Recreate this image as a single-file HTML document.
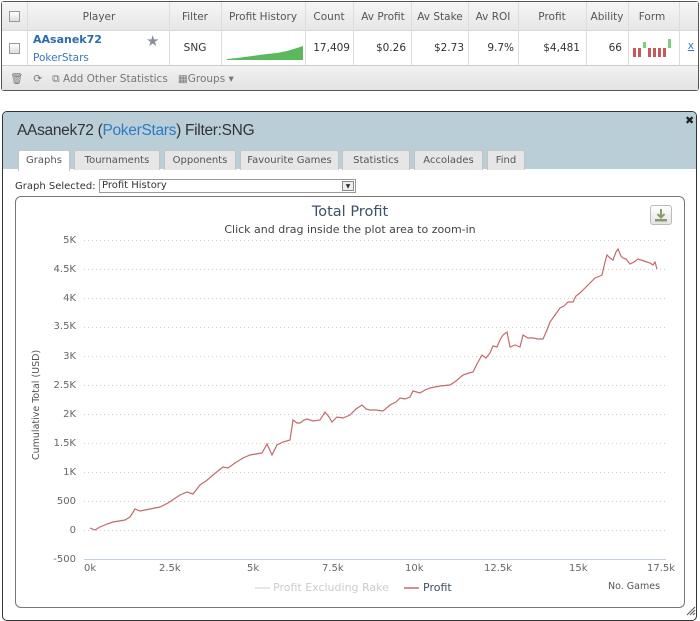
<!DOCTYPE html>
<html><head><meta charset="utf-8"><style>
*{margin:0;padding:0;box-sizing:border-box}
body{width:700px;height:618px;background:#fff;font-family:"DejaVu Sans","Liberation Sans",sans-serif;position:relative;overflow:hidden;color:#333}
.a{position:absolute}
.tbl{left:1px;top:1px;width:698px;height:90px;border:1px solid #555;border-radius:3px;background:#fff}
.hdr{left:0;top:0;width:696px;height:29px;background:linear-gradient(#f6f6f6,#e6e6e6);border-bottom:1px solid #d8d8d8}
.c{position:absolute;font-size:10.5px;color:#555;text-align:center;top:9px}
.v{position:absolute;font-size:10.5px;color:#333;top:40px;text-align:right}
.vl{position:absolute;width:1px;background:#ddd;top:0;height:63px}
.foot{left:0;top:63px;width:696px;height:25px;background:linear-gradient(#f2f2f2,#e2e2e2);border-top:1px solid #ccc}
.cb{position:absolute;width:11px;height:11px;border:1px solid #999;background:linear-gradient(#fff,#ddd)}
.dlg{left:2px;top:111px;width:695px;height:510px;border:1px solid #333;border-radius:5px;background:#fff;overflow:hidden}
.dh{left:0;top:0;width:695px;height:57px;background:#b9ced7}
.tab{position:absolute;top:38px;height:20px;background:#e6e6e6;border:1px solid #c5c5c5;border-bottom:none;font-size:10px;color:#555;text-align:center;line-height:19px;border-radius:2px 2px 0 0}
.yl{position:absolute;font-size:10px;color:#666;text-align:right;width:40px;left:36px}
.xl{position:absolute;font-size:10px;color:#666;top:563px}
</style></head><body>
<div class="a tbl">
 <div class="a hdr"></div>
 <div class="cb" style="left:7px;top:9px"></div>
 <div class="c" style="left:27px;width:140px">Player</div>
 <div class="c" style="left:168px;width:50px">Filter</div>
 <div class="c" style="left:220px;width:82px">Profit History</div>
 <div class="c" style="left:304px;width:46px">Count</div>
 <div class="c" style="left:352px;width:58px">Av Profit</div>
 <div class="c" style="left:410px;width:56px">Av Stake</div>
 <div class="c" style="left:466px;width:50px">Av ROI</div>
 <div class="c" style="left:516px;width:68px">Profit</div>
 <div class="c" style="left:584px;width:42px">Ability</div>
 <div class="c" style="left:626px;width:48px">Form</div>
 <div class="vl" style="left:25px"></div><div class="vl" style="left:167px"></div><div class="vl" style="left:219px"></div><div class="vl" style="left:303px"></div><div class="vl" style="left:351px"></div><div class="vl" style="left:409px"></div><div class="vl" style="left:466px"></div><div class="vl" style="left:516px"></div><div class="vl" style="left:584px"></div><div class="vl" style="left:626px"></div><div class="vl" style="left:677px"></div>
 <div class="cb" style="left:7px;top:41px"></div>
 <div class="a" style="left:31px;top:31px;font-size:11px;font-weight:bold;color:#2a6bb0">AAsanek72</div>
 <div class="a" style="left:31px;top:50px;font-size:10.5px;color:#3a79bb">PokerStars</div>
 <div class="a" style="left:144px;top:30px;font-size:15px;color:#8a8fa0">★</div>
 <div class="v" style="left:168px;width:50px;text-align:center">SNG</div>
 <svg class="a" style="left:225px;top:38px" width="76" height="20"><path d="M0 19 L10 18 L25 16 L40 14 L50 13 L60 11 L70 8 L76 6 L76 20 L0 20Z" fill="#5cb85c"/></svg>
 <div class="v" style="left:304px;width:44px">17,409</div>
 <div class="v" style="left:352px;width:52px">$0.26</div>
 <div class="v" style="left:410px;width:52px">$2.73</div>
 <div class="v" style="left:466px;width:46px">9.7%</div>
 <div class="v" style="left:516px;width:62px">$4,481</div>
 <div class="v" style="left:584px;width:36px">66</div>
 <svg class="a" style="left:630px;top:36px" width="44" height="22"><g fill="#c9585a"><rect x="1" y="10" width="3" height="9"/><rect x="6" y="10" width="3" height="9"/><rect x="16" y="10" width="3" height="9"/><rect x="21" y="10" width="3" height="9"/><rect x="26" y="10" width="3" height="9"/><rect x="31" y="10" width="3" height="9"/></g><g fill="#7ccf7c"><rect x="11" y="4" width="3" height="6"/><rect x="36" y="1" width="3" height="9"/></g></svg>
 <div class="v" style="left:680px;width:12px;color:#3a79bb;text-decoration:underline;top:38px">x</div>
 <div class="a foot"></div>
 <div class="a" style="left:8px;top:70px;font-size:10.5px;color:#777">🗑&nbsp;&nbsp; ⟳&nbsp;&nbsp; ⧉ Add Other Statistics&nbsp;&nbsp; ▦Groups ▾</div>
</div>

<div class="a dlg">
 <div class="a dh"></div>
 <div class="a" style="left:14px;top:10px;font-size:15.5px;font-family:'Liberation Sans',sans-serif;color:#333;letter-spacing:-0.3px">AAsanek72 (<span style="color:#2d7bc4">PokerStars</span>) Filter:SNG</div>
 <div class="a" style="left:682px;top:2px;font-size:11px;font-weight:bold;color:#222">✖</div>
 <div class="tab" style="left:15px;width:52px;background:#fff;height:21px">Graphs</div>
 <div class="tab" style="left:71px;width:86px">Tournaments</div>
 <div class="tab" style="left:161px;width:72px">Opponents</div>
 <div class="tab" style="left:237px;width:99px">Favourite Games</div>
 <div class="tab" style="left:339px;width:68px">Statistics</div>
 <div class="tab" style="left:411px;width:69px">Accolades</div>
 <div class="tab" style="left:484px;width:38px">Find</div>
 <div class="a" style="left:12px;top:69px;font-size:10px;color:#333">Graph Selected:</div>
 <div class="a" style="left:96px;top:67px;width:257px;height:14px;border:1px solid #999;font-size:10px;padding-left:2px;line-height:12px">Profit History<span style="position:absolute;right:1px;top:1px;width:12px;height:10px;border:1px solid #888;background:#eee;font-size:6px;text-align:center;line-height:9px">▼</span></div>
 <div class="a" style="left:12px;top:84px;width:670px;height:412px;border:1px solid #777;border-radius:6px"></div>
</div>

<div class="a" style="left:200px;top:204px;width:300px;text-align:center;font-size:14.5px;color:#3d5066">Total Profit</div>
<div class="a" style="left:160px;top:223px;width:380px;text-align:center;font-size:11px;color:#444">Click and drag inside the plot area to zoom-in</div>
<div class="a" style="left:650px;top:205px;width:22px;height:20px;border:1px solid #bbb;border-radius:3px;background:linear-gradient(#fff,#e4e4e4)">
 <svg width="20" height="18"><path d="M10 3 V11 M6.5 8 L10 11.5 L13.5 8" stroke="#8a9a6a" stroke-width="2" fill="none"/><rect x="4" y="13" width="12" height="2.5" fill="#8a9a6a"/></svg>
</div>

<div class="a" style="font-size:9.5px;color:#555;transform:rotate(-90deg);transform-origin:0 0;top:460px;left:31px;white-space:nowrap">Cumulative Total (USD)</div>
<div class="yl" style="top:235px">5K</div><div class="yl" style="top:264px">4.5K</div><div class="yl" style="top:293px">4K</div><div class="yl" style="top:321px">3.5K</div><div class="yl" style="top:351px">3K</div><div class="yl" style="top:380px">2.5K</div><div class="yl" style="top:409px">2K</div><div class="yl" style="top:438px">1.5K</div><div class="yl" style="top:467px">1K</div><div class="yl" style="top:496px">500</div><div class="yl" style="top:525px">0</div><div class="yl" style="top:554px">-500</div>
<svg class="a" style="left:0;top:0" width="700" height="618">
 <g stroke="#ccc" stroke-dasharray="1,3" stroke-width="1">
  <line x1="84" x2="666" y1="240.5" y2="240.5"/><line x1="84" x2="666" y1="269.5" y2="269.5"/><line x1="84" x2="666" y1="298.5" y2="298.5"/><line x1="84" x2="666" y1="327.5" y2="327.5"/><line x1="84" x2="666" y1="356.5" y2="356.5"/><line x1="84" x2="666" y1="385.5" y2="385.5"/><line x1="84" x2="666" y1="414.5" y2="414.5"/><line x1="84" x2="666" y1="443.5" y2="443.5"/><line x1="84" x2="666" y1="472.5" y2="472.5"/><line x1="84" x2="666" y1="501.5" y2="501.5"/><line x1="84" x2="666" y1="530.5" y2="530.5"/>
 </g>
 <line x1="84" x2="666" y1="559.5" y2="559.5" stroke="#c0d0e0"/>
 <polyline fill="none" stroke="#c26a6a" stroke-width="1.2" points="90,528 95,530 100,527 107,524 113,522 119,521 125,520 130,517 135,509 140,511 145,510 150,509 155,508 160,507 168,503 174,499 180,495 187,492 193,494 200,485 206,481 213,475 218,471 223,467 228,468 235,463 243,458 250,455 256,454 262,453 267,444 272,455 277,445 283,442 290,440 293,420 297,423 300,423 304,420 307,419 313,421 320,420 325,412 329,417 332,422 337,417 343,418 350,415 356,409 362,405 366,409 370,410 376,410 383,411 390,405 396,402 400,398 405,399 410,397 413,391 420,393 425,390 430,388 440,386 450,385 456,381 463,375 469,373 473,372 477,364 482,355 486,358 490,353 493,346 497,347 500,340 503,335 507,332 510,347 515,345 520,347 523,335 528,338 533,338 538,339 543,339 547,330 550,322 555,315 560,308 564,306 568,302 573,302 576,296 580,293 585,288 590,283 593,280 595,278 600,276 602,275 605,262 607,255 610,258 613,260 616,252 618,249 621,256 623,258 626,259 630,264 634,262 638,259 644,261 650,263 653,265 655,262 657,269"/>
 <line x1="255" x2="270" y1="588" y2="588" stroke="#ddd" stroke-width="1.5"/>
 <line x1="404" x2="419" y1="588" y2="588" stroke="#c26a6a" stroke-width="1.5"/>
 <path d="M687 615 L695 607 M690 615 L695 610 M693 615 L695 613" stroke="#555"/>
</svg>
<div class="xl" style="left:84px">0k</div><div class="xl" style="left:159px">2.5k</div><div class="xl" style="left:247px">5k</div><div class="xl" style="left:322px">7.5k</div><div class="xl" style="left:405px">10k</div><div class="xl" style="left:484px">12.5k</div><div class="xl" style="left:569px">15k</div><div class="xl" style="left:647px">17.5k</div>
<div class="a" style="left:273px;top:581px;font-size:11px;color:#ccc">Profit Excluding Rake</div>
<div class="a" style="left:423px;top:581px;font-size:11px;color:#3d5066">Profit</div>
<div class="a" style="left:608px;top:581px;font-size:9.5px;color:#555">No. Games</div>
</body></html>
